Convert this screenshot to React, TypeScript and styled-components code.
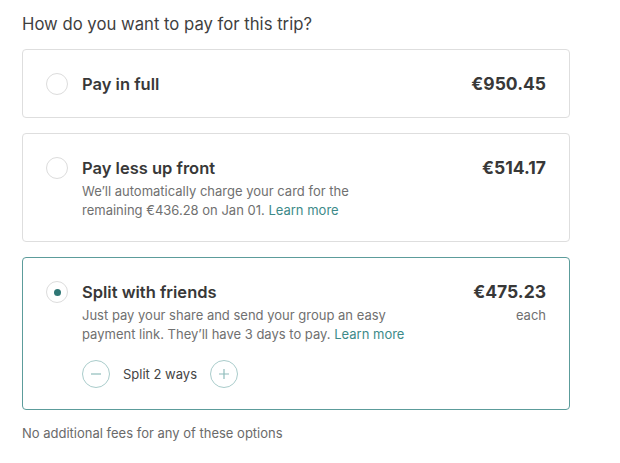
import styled, { createGlobalStyle } from 'styled-components';

const Global = createGlobalStyle`
  body {
    margin: 0;
    background: #fff;
    font-family: 'Inter', 'Noto Sans', sans-serif;
    color: #3c3c3c;
  }
`;

const Page = styled.div`
  width: 548px;
  padding: 13px 0 0 22px;
`;

const Heading = styled.h2`
  margin: 0 0 14px;
  font-size: 16.7px;
  font-weight: 400;
  line-height: 22px;
  color: #3f3f3f;
`;

const List = styled.div`
  display: flex;
  flex-direction: column;
  gap: 15px;
`;

const Card = styled.div<{ $selected?: boolean }>`
  display: flex;
  align-items: flex-start;
  padding: 23px 23px 21px;
  border: 1px solid ${(p) => (p.$selected ? '#5c9c9b' : '#dedede')};
  border-radius: 4px;
  &:first-child {
    padding: 23px 23px 22px;
  }
`;

const Radio = styled.span<{ $checked?: boolean }>`
  flex: none;
  box-sizing: border-box;
  width: 22px;
  height: 22px;
  margin-right: 14px;
  border-radius: 50%;
  border: 1px solid #dcdcdc;
  display: flex;
  align-items: center;
  justify-content: center;
  &::after {
    content: '';
    display: ${(p) => (p.$checked ? 'block' : 'none')};
    width: 7px;
    height: 7px;
    border-radius: 50%;
    background: #2f7775;
  }
`;

const Body = styled.div`
  flex: 1;
`;

const Title = styled.div`
  font-size: 16.5px;
  font-weight: 600;
  line-height: 22px;
  color: #383838;
`;

const Desc = styled.p`
  margin: 3px 0 0;
  font-size: 13px;
  line-height: 19px;
  color: #707070;
`;

const Link = styled.a`
  color: #3d8a89;
  text-decoration: none;
`;

const PriceCol = styled.div`
  text-align: right;
`;

const Price = styled.div`
  font-size: 17.5px;
  font-weight: 650;
  line-height: 22px;
  color: #383838;
`;

const Each = styled.div`
  margin-top: 3px;
  font-size: 13px;
  line-height: 19px;
  color: #707070;
`;

const Stepper = styled.div`
  display: flex;
  align-items: center;
  gap: 13px;
  margin-top: 16px;
`;

const StepButton = styled.button`
  box-sizing: border-box;
  width: 28px;
  height: 28px;
  padding: 0;
  border-radius: 50%;
  border: 1px solid #a9cccb;
  background: #fff;
  display: flex;
  align-items: center;
  justify-content: center;
  cursor: pointer;
`;

const StepLabel = styled.span`
  font-size: 13px;
  color: #444;
`;

const Note = styled.p`
  margin: 14px 0 0;
  font-size: 13px;
  line-height: 18px;
  color: #6a6a6a;
`;

const Minus = () => (
  <svg width="12" height="12" viewBox="0 0 12 12">
    <path d="M1 6h10" stroke="#8fbcbb" strokeWidth="1.2" />
  </svg>
);

const Plus = () => (
  <svg width="12" height="12" viewBox="0 0 12 12">
    <path d="M1 6h10M6 1v10" stroke="#8fbcbb" strokeWidth="1.2" />
  </svg>
);

export default function App() {
  return (
    <>
      <Global />
      <Page>
        <Heading>How do you want to pay for this trip?</Heading>
        <List>
          <Card>
            <Radio />
            <Body>
              <Title>Pay in full</Title>
            </Body>
            <PriceCol>
              <Price>€950.45</Price>
            </PriceCol>
          </Card>
          <Card>
            <Radio />
            <Body>
              <Title>Pay less up front</Title>
              <Desc>
                We’ll automatically charge your card for the
                <br />
                remaining €436.28 on Jan 01. <Link href="#">Learn more</Link>
              </Desc>
            </Body>
            <PriceCol>
              <Price>€514.17</Price>
            </PriceCol>
          </Card>
          <Card $selected>
            <Radio $checked />
            <Body>
              <Title>Split with friends</Title>
              <Desc>
                Just pay your share and send your group an easy
                <br />
                payment link. They’ll have 3 days to pay. <Link href="#">Learn more</Link>
              </Desc>
              <Stepper>
                <StepButton aria-label="Decrease">
                  <Minus />
                </StepButton>
                <StepLabel>Split 2 ways</StepLabel>
                <StepButton aria-label="Increase">
                  <Plus />
                </StepButton>
              </Stepper>
            </Body>
            <PriceCol>
              <Price>€475.23</Price>
              <Each>each</Each>
            </PriceCol>
          </Card>
        </List>
        <Note>No additional fees for any of these options</Note>
      </Page>
    </>
  );
}
